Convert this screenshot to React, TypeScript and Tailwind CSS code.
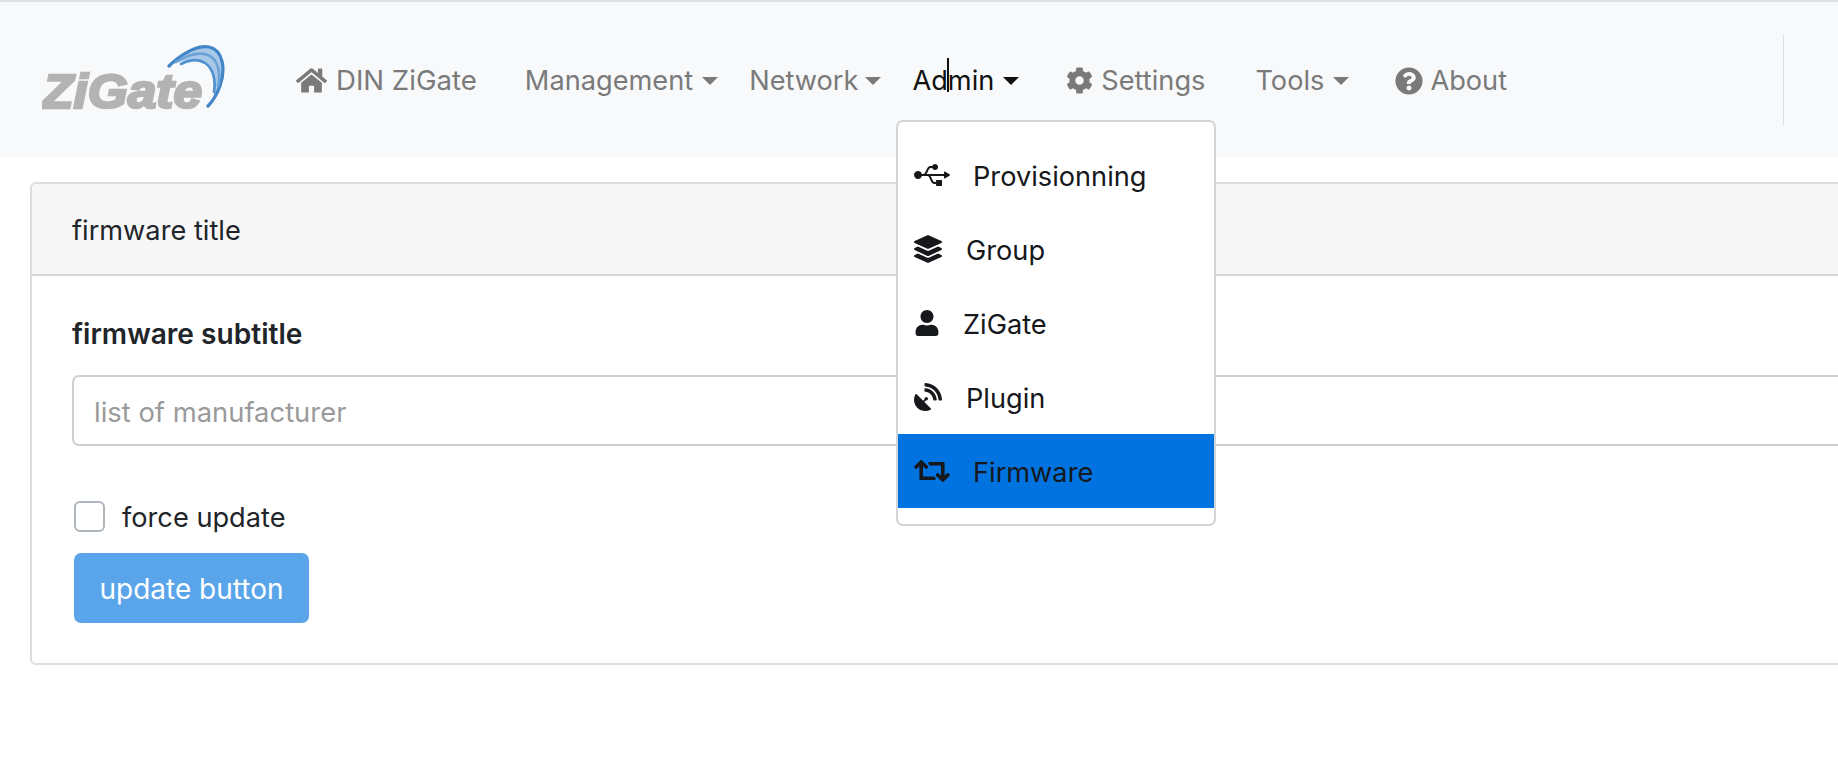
import { FaCog, FaHome, FaLayerGroup, FaQuestionCircle, FaRetweet, FaSatelliteDish, FaUsb, FaUser } from "react-icons/fa";
import type { ReactNode } from "react";

function Caret({ className = "" }: { className?: string }) {
    return <span className={`ml-[9px] inline-block w-0 h-0 border-x-[8px] border-x-transparent border-t-[8px] border-t-current ${className}`} />;
}

function Logo() {
    return (
        <svg width="184" height="78" viewBox="0 0 184 78" className="shrink-0 mt-[8px]">
            <text x="0" y="63" fontFamily="'Liberation Sans', sans-serif" fontSize="49" fontWeight="700" fontStyle="italic" fill="#b3b3b3" stroke="#b3b3b3" strokeWidth="2.6" textLength="160" lengthAdjust="spacingAndGlyphs">ZiGate</text>
            <path d="M127 21 C140 8 156 0 167 2 C181 5 184 24 178 41 C175 49 171 56 166 61 C170 55 172 51 172 47 C174 35 171 23 163 18 C155 13 141 14 127 21Z" fill="#a8c8e8" />
            <g fill="none" strokeLinecap="round">
                <path d="M127 21 C140 8 156 0 167 2 C181 5 184 24 178 41 C175 49 171 56 166 61" stroke="#4285c8" strokeWidth="3.2" />
                <path d="M134 17 C147 9 158 7 166 10 C176 14 179 28 176 41" stroke="#6ba3d9" strokeWidth="2.6" />
                <path d="M139 19 C149 14 157 14 163 18 C171 23 174 35 172 47" stroke="#4f90d0" strokeWidth="2.6" />
            </g>
        </svg>
    );
}

function NavItem({ children, className = "" }: { children: ReactNode; className?: string }) {
    return <a className={`flex items-center mt-[3px] text-[#7a7a7a] ${className}`}>{children}</a>;
}

function MenuItem({ icon, label, gap, active }: { icon: ReactNode; label: string; gap: string; active?: boolean }) {
    return (
        <a className={`h-[74px] pl-[16px] flex items-center text-[#16181b] ${active ? "bg-[#0073e0]" : ""}`}>
            {icon}
            <span className={`mt-[4px] ${gap}`}>{label}</span>
        </a>
    );
}

export default function App() {
    return (
        <div className="relative w-[1838px] h-[780px] overflow-hidden bg-white text-[27.2px] text-[#212529] font-['Inter','Liberation_Sans',sans-serif]">
            <div className="h-[2px] bg-[#dee2e6]" />
            <nav className="h-[155px] bg-[#f8f9fa] flex items-center pl-[42px] relative">
                <Logo />
                <NavItem className="ml-[70px] text-[27.6px]"><FaHome className="text-[31px] mr-[9px]" />DIN ZiGate</NavItem>
                <NavItem className="ml-[48px]">Management<Caret /></NavItem>
                <NavItem className="ml-[31px]">Network<Caret className="!ml-[7px]" /></NavItem>
                <NavItem className="ml-[31px] !text-[#111] relative">
                    Admin<Caret />
                    <span className="absolute left-[35px] top-[-3px] h-[34px] w-[2px] bg-[#111]" />
                </NavItem>
                <NavItem className="ml-[47px]"><FaCog className="text-[27px] mr-[8px]" />Settings</NavItem>
                <NavItem className="ml-[50px]">Tools<Caret /></NavItem>
                <NavItem className="ml-[46px]"><FaQuestionCircle className="text-[28px] mr-[7px]" />About</NavItem>
                <div className="absolute left-[1783px] top-[33px] h-[90px] w-[1px] bg-[#dcdde0]" />
            </nav>

            <section className="mt-[25px] ml-[30px] w-[1900px] h-[483px] border-2 border-[#dcdddf] rounded-[6px] overflow-hidden">
                <header className="h-[92px] pl-[40px] pt-[4px] bg-[#f7f7f7] border-b-2 border-[#d6d7d9] flex items-center">firmware title</header>
                <div className="pl-[40px] pt-[43px]">
                    <h5 className="font-semibold text-[28.1px] leading-[30px]">firmware subtitle</h5>
                    <div className="mt-[26px] h-[71px] pl-[20px] pt-[4px] border-2 border-[#cfd0d2] rounded-[7px] flex items-center text-[#9a9a9a] text-[27.4px]">list of manufacturer</div>
                    <label className="mt-[52px] ml-[2px] flex items-center">
                        <span className="w-[31px] h-[31px] -mt-[4px] border-2 border-[#aeb5bd] rounded-[6px] bg-white" />
                        <span className="ml-[17px]">force update</span>
                    </label>
                    <button className="mt-[14px] ml-[2px] pt-[3px] block w-[235px] h-[70px] rounded-[7px] bg-[#5aa5e9] text-white text-[28px]">update button</button>
                </div>
            </section>

            <div className="absolute left-[896px] top-[120px] w-[320px] h-[406px] py-[16px] bg-white border-2 border-[#d4d5d7] rounded-[7px] flex flex-col">
                <MenuItem icon={<FaUsb className="text-[36px]" />} label="Provisionning" gap="ml-[23px]" />
                <MenuItem icon={<FaLayerGroup className="text-[28px]" />} label="Group" gap="ml-[24px]" />
                <MenuItem icon={<FaUser className="text-[26px]" />} label="ZiGate" gap="ml-[23px]" />
                <MenuItem icon={<FaSatelliteDish className="text-[28px]" />} label="Plugin" gap="ml-[24px]" />
                <MenuItem icon={<FaRetweet className="text-[36px]" />} label="Firmware" gap="ml-[23px]" active />
            </div>
        </div>
    );
}
